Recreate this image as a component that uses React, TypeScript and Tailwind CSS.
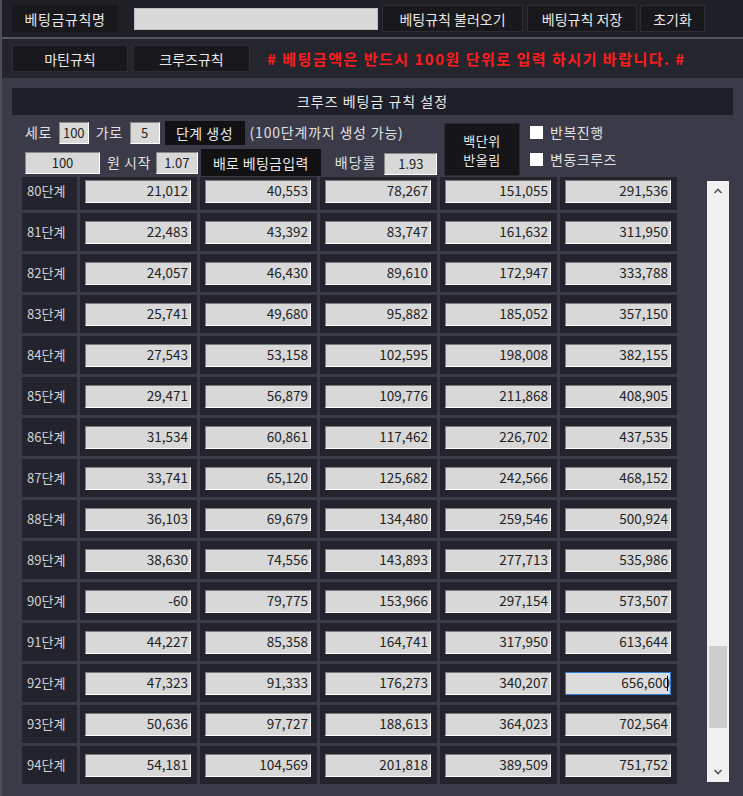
import React from "react";

const rows: [number, string[]][] = [
  [80, ["21,012", "40,553", "78,267", "151,055", "291,536"]],
  [81, ["22,483", "43,392", "83,747", "161,632", "311,950"]],
  [82, ["24,057", "46,430", "89,610", "172,947", "333,788"]],
  [83, ["25,741", "49,680", "95,882", "185,052", "357,150"]],
  [84, ["27,543", "53,158", "102,595", "198,008", "382,155"]],
  [85, ["29,471", "56,879", "109,776", "211,868", "408,905"]],
  [86, ["31,534", "60,861", "117,462", "226,702", "437,535"]],
  [87, ["33,741", "65,120", "125,682", "242,566", "468,152"]],
  [88, ["36,103", "69,679", "134,480", "259,546", "500,924"]],
  [89, ["38,630", "74,556", "143,893", "277,713", "535,986"]],
  [90, ["-60", "79,775", "153,966", "297,154", "573,507"]],
  [91, ["44,227", "85,358", "164,741", "317,950", "613,644"]],
  [92, ["47,323", "91,333", "176,273", "340,207", "656,600"]],
  [93, ["50,636", "97,727", "188,613", "364,023", "702,564"]],
  [94, ["54,181", "104,569", "201,818", "389,509", "751,752"]],
];

function DarkBtn({ children, className }: { children: React.ReactNode; className?: string }) {
  return (
    <div
      className={
        "flex items-center justify-center bg-[#18181d] border border-[#2c2c34] text-[#e8e8e8] text-[14px] leading-none " +
        (className ?? "")
      }
    >
      {children}
    </div>
  );
}

function SmallInput({ value, className }: { value: string; className?: string }) {
  return (
    <div
      className={
        "flex items-center justify-center h-[22px] bg-[#d8d8d8] border border-t-[#8a8a8a] border-l-[#8a8a8a] border-r-white border-b-white text-[#222] text-[13px] leading-none " +
        (className ?? "")
      }
    >
      {value}
    </div>
  );
}

export default function App() {
  return (
    <div
      className="w-[743px] h-[796px] overflow-hidden bg-[#3a3a48] border-l-2 border-[#4e4e5a] flex flex-col"
      style={{ fontFamily: '"Noto Sans CJK KR", "Noto Sans", sans-serif' }}
    >
      {/* top bar */}
      <div className="h-[37px] bg-[#1f1f26] flex items-center pl-[10px] shrink-0">
        <DarkBtn className="w-[106px] h-[27px] border-transparent bg-[#1c1c22] tracking-[0.6px]">베팅금규칙명</DarkBtn>
        <div className="ml-[16px] w-[244px] h-[22px] bg-[#d9d9d9] border border-[#bfbfbf]" />
        <DarkBtn className="ml-[4px] w-[141px] h-[27px]">베팅규칙 불러오기</DarkBtn>
        <DarkBtn className="ml-[4px] w-[110px] h-[27px]">베팅규칙 저장</DarkBtn>
        <DarkBtn className="ml-[3px] w-[65px] h-[27px]">초기화</DarkBtn>
      </div>
      <div className="h-[2px] bg-[#55555f] shrink-0" />
      {/* second row */}
      <div className="h-[39px] bg-[#25252d] flex items-center pl-[10px] shrink-0">
        <DarkBtn className="w-[116px] h-[27px]">마틴규칙</DarkBtn>
        <DarkBtn className="ml-[5px] w-[117px] h-[27px]">크루즈규칙</DarkBtn>
        <div className="ml-[17px] text-[#ff1c1c] font-bold text-[15px] tracking-[1.5px] leading-none whitespace-nowrap">
          # 베팅금액은 반드시 100원 단위로 입력 하시기 바랍니다. #
        </div>
      </div>

      {/* panel */}
      <div className="flex flex-col pl-[10px] pt-[10px]">
        <div className="w-[721px] h-[27px] bg-[#1f1f29] flex items-center justify-center text-[#e8e8e8] text-[14px] tracking-[1px]">
          크루즈 베팅금 규칙 설정
        </div>

        <div className="flex mt-[5px] h-[57px]">
          <div className="flex flex-col pl-[13px] w-[432px]">
            <div className="flex items-center h-[25px] text-[#e0e0e0] text-[14px]">
              <span className="tracking-[0.5px]">세로</span>
              <SmallInput value="100" className="ml-[7px] w-[30px]" />
              <span className="ml-[7px] tracking-[0.5px]">가로</span>
              <SmallInput value="5" className="ml-[7px] w-[30px]" />
              <DarkBtn className="ml-[5px] w-[80px] h-[24px] bg-[#111114] border-[#111114] tracking-[0.5px]">단계 생성</DarkBtn>
              <span className="ml-[5px] text-[14px] tracking-[0.8px] whitespace-nowrap">(100단계까지 생성 가능)</span>
            </div>
            <div className="flex items-center h-[27px] mt-[4px] text-[#e0e0e0] text-[14px]">
              <SmallInput value="100" className="w-[75px]" />
              <span className="ml-[7px] tracking-[0.5px]">원 시작</span>
              <SmallInput value="1.07" className="ml-[5px] w-[42px]" />
              <DarkBtn className="ml-[3px] w-[120px] h-[27px] bg-[#111114] border-[#111114] tracking-[0.3px]">배로 베팅금입력</DarkBtn>
              <span className="ml-[14px] tracking-[1px]">배당률</span>
              <SmallInput value="1.93" className="ml-[8px] w-[53px] mt-[2px]" />
            </div>
          </div>
          <div className="mt-[3px] w-[76px] h-[53px] bg-[#16161a] border border-[#2a2a30] flex flex-col items-center justify-center text-center text-[#e8e8e8] text-[13px]">
            <div className="leading-[19px] tracking-[0.5px]">백단위</div>
            <div className="leading-[19px] tracking-[0.5px]">반올림</div>
          </div>
          <div className="flex flex-col ml-[10px] mt-[4px] gap-[11px] text-[#e0e0e0] text-[14px]">
            <div className="flex items-center h-[16px]">
              <div className="w-[13px] h-[13px] bg-white" />
              <span className="ml-[7px] tracking-[0.5px]">반복진행</span>
            </div>
            <div className="flex items-center h-[16px]">
              <div className="w-[13px] h-[13px] bg-white" />
              <span className="ml-[7px] tracking-[0.5px]">변동크루즈</span>
            </div>
          </div>
        </div>

        {/* grid + scrollbar */}
        <div className="flex">
          <div className="ml-[10px] h-[608px] overflow-hidden">
            <div className="-mt-[5px] flex flex-col gap-[3px]">
              {rows.map(([n, vals]) => (
                <div key={n} className="flex gap-[3px] h-[38px]">
                  <div className="w-[55px] bg-[#23232d] flex items-center pl-[5px] text-[#d4d4d4] text-[13px]">
                    {n}단계
                  </div>
                  {vals.map((v, i) => {
                    const focused = n === 92 && i === 4;
                    return (
                      <div key={i} className="w-[117px] bg-[#23232d] flex items-center pl-[5px] pr-[6px]">
                        <div
                          className={
                            "w-full h-[23px] flex items-center justify-end pr-[2px] text-[#222] text-[13.5px] leading-none " +
                            (focused
                              ? "bg-[#dcdcdc] border border-[#2a7fd4]"
                              : "bg-[#d8d8d8] border border-t-[#7a7a7a] border-l-[#7a7a7a] border-r-white border-b-white")
                          }
                        >
                          {v}
                          {focused && <span className="w-[1px] h-[15px] bg-black -ml-[3px]" />}
                        </div>
                      </div>
                    );
                  })}
                </div>
              ))}
            </div>
          </div>
          <div className="ml-[30px] mt-[4px] w-[22px] h-[601px] bg-[#f0f0f0] flex flex-col items-center relative">
            <svg width="10" height="8" viewBox="0 0 10 8" className="mt-[6px]">
              <path d="M1.5 6 L5 2.5 L8.5 6" stroke="#555" strokeWidth="1.6" fill="none" />
            </svg>
            <div className="absolute left-[2px] right-[2px] top-[465px] h-[82px] bg-[#cdcdcd]" />
            <svg width="10" height="8" viewBox="0 0 10 8" className="mt-auto mb-[6px]">
              <path d="M1.5 2 L5 5.5 L8.5 2" stroke="#555" strokeWidth="1.6" fill="none" />
            </svg>
          </div>
        </div>
      </div>
    </div>
  );
}
